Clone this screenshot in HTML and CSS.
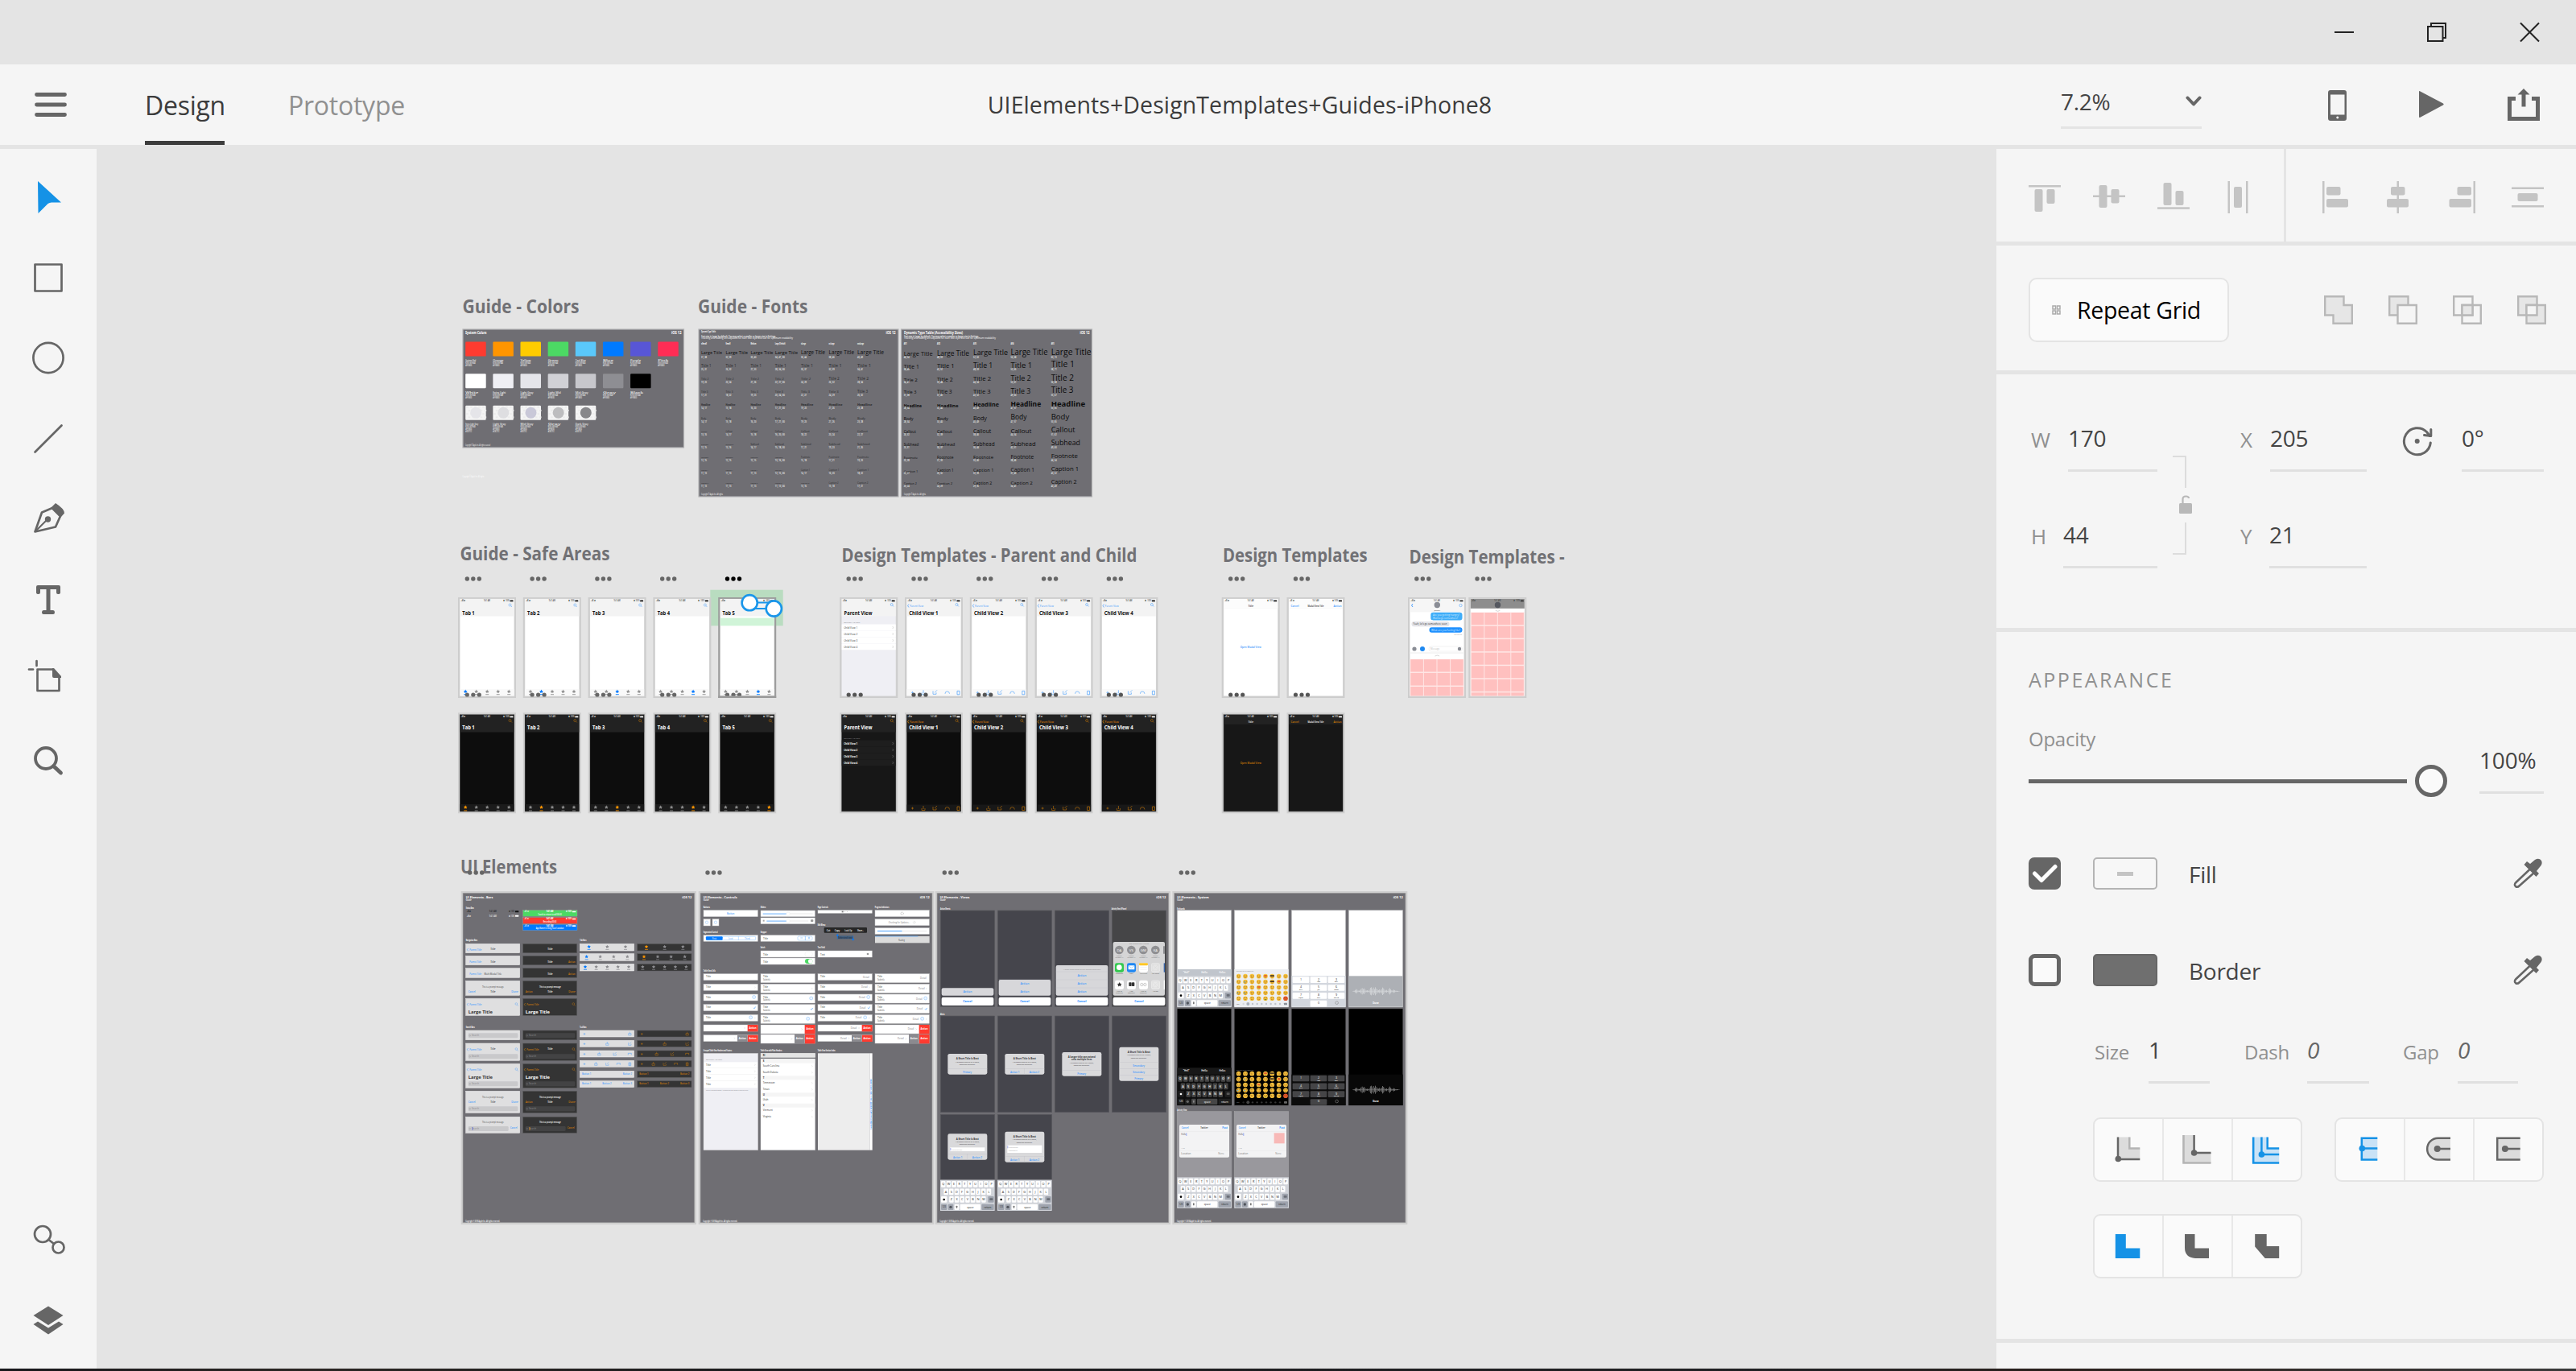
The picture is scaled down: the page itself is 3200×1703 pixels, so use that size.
FILE: index.html
```html
<!DOCTYPE html>
<html lang="en">
<head>
<meta charset="utf-8">
<title>UIElements+DesignTemplates+Guides-iPhone8</title>
<link rel="stylesheet" href="styles.css">
</head>
<body>
<div class="app">
  <div class="titlebar">
    <svg class="winbtn" viewBox="2854 0 115 80"><path d="M2900 40H2924"/></svg>
    <svg class="winbtn" viewBox="2969 0 115 80"><path d="M3016 33H3034.500V51H3016ZM3020 33V29H3038V47H3034.500"/></svg>
    <svg class="winbtn" viewBox="3084 0 115 80"><path d="M3131 28.500L3154 51.500M3154 28.500L3131 51.500"/></svg>
  </div>

  <header class="header">
    <div class="header-left">
      <svg class="menu" viewBox="43 110 40 40"><path d="M45.500 117.500H80.500M45.500 130H80.500M45.500 142.500H80.500"/></svg>
      <div class="tab active">Design</div>
      <div class="tab">Prototype</div>
    </div>
    <div class="doc-title">UIElements+DesignTemplates+Guides-iPhone8</div>
    <div class="header-right">
      <div class="zoom"><span>7.2%</span><svg width="20" height="14" viewBox="0 0 20 14"><path d="M2.500 2.500L10 10.500L17.500 2.500"/></svg></div>
      <div class="actions">
        <svg viewBox="2885 110 40 40"><path fill-rule="evenodd" d="M2895 112H2912Q2915 112 2915 115V147Q2915 150 2912 150H2895Q2892 150 2892 147V115Q2892 112 2895 112ZM2895 117.500V142.500H2912.500V117.500ZM2903.700 144.500A1.500 1.500 0 1 0 2903.800 144.500Z"/></svg>
        <svg viewBox="3000 110 40 40"><path d="M3005 114Q3005 112.500 3006.500 113.500L3035 128.500Q3036.500 129.500 3035 130.500L3006.500 145.800Q3005 146.500 3005 145Z"/></svg>
        <svg viewBox="3115 110 40 40"><path d="M3115 120H3125V125H3120V145H3150V125H3145V120H3155V150H3115ZM3135 110L3142.500 117.500H3137.500V132.500H3132.500V117.500H3127.500Z"/></svg>
      </div>
    </div>
  </header>

  <main class="main">
    <nav class="tools">
      <svg viewBox="0 195 120 100"><path class="blue" d="M47 225L76 251.500H64Q61.500 251.500 59.500 253L47.500 265Z"/></svg>
      <svg viewBox="0 295 120 100"><rect class="ln" x="43.500" y="328.500" width="33" height="33"/></svg>
      <svg viewBox="0 395 120 100"><circle class="ln" cx="60" cy="444.500" r="18.600"/></svg>
      <svg viewBox="0 495 120 100"><path class="ln" d="M43.500 561.500L76.500 528.500"/></svg>
      <svg viewBox="0 595 120 100"><path class="ln" d="M43.500 660.500L52 636.500L65 631L75 641L69 654.500Z"/><path class="ln thin" d="M44 660L58 646"/><circle class="fl" cx="59.500" cy="645" r="3.700"/><path class="fl" d="M63 631L69 625Q80 632 80 637.500L75 643Z"/></svg>
      <svg viewBox="0 695 120 100"><path class="fl" d="M47 727H73Q75 727 75 729V736Q75 738 72 738Q70 738 70 736V732H62.500V758H66Q68 758 68 760.500Q68 763 66 763H54Q52 763 52 760.500Q52 758 54 758H57.500V732H50V736Q50 738 48 738Q45 738 45 736V729Q45 727 47 727Z"/></svg>
      <svg viewBox="0 795 120 100"><path class="ln" d="M46.500 833V858H73.500V840M46.500 831.500H66M45.500 821V827M36 831.500H41"/><path class="fl" d="M65 830H67L76 840V842H67Q65 842 65 840Z"/></svg>
      <svg viewBox="0 895 120 100"><circle class="ln w4" cx="57" cy="942" r="13"/><path class="ln w5" d="M67.500 952.500L75.500 960"/></svg>
      <svg class="push" viewBox="0 1490 120 100"><circle class="ln" cx="53" cy="1533" r="10"/><circle class="ln" cx="72.500" cy="1549.500" r="7"/><path class="ln" d="M60.500 1540L67 1545"/></svg>
      <svg viewBox="0 1590 120 100"><path class="fl" d="M60 1622.500L78.500 1634L60 1646L41.500 1634ZM47 1641.500L60 1649.500L73 1641.500L78.500 1645L60 1657.500L41.500 1645Z"/></svg>
    </nav>

    <section class="canvas">
      <svg id="board" viewBox="120 185 2360 1515" width="2360" height="1515"></svg>
    </section>

    <aside class="panel">
      <div class="align">
        <div class="align-group split">
          <svg viewBox="2520 225 40 40"><rect x="2520" y="230" width="40" height="2.500"/><rect x="2527.500" y="235" width="10" height="28" rx="2"/><rect x="2542.500" y="235" width="10" height="18" rx="2"/></svg>
          <svg viewBox="2600 225 40 40"><rect x="2600" y="242.500" width="40" height="2.500"/><rect x="2607.500" y="230" width="10" height="28" rx="2"/><rect x="2622.500" y="235" width="10" height="17.500" rx="2"/></svg>
          <svg viewBox="2680 225 40 40"><rect x="2680" y="257.300" width="40" height="2.500"/><rect x="2687.500" y="227" width="10" height="28" rx="2"/><rect x="2702.500" y="237" width="10" height="18" rx="2"/></svg>
          <svg viewBox="2760 225 40 40"><rect x="2767.500" y="225" width="2.500" height="40"/><rect x="2790" y="225" width="2.500" height="40"/><rect x="2775" y="232" width="10" height="26" rx="2"/></svg>
        </div>
        <div class="align-group">
          <svg viewBox="2880 225 40 40"><rect x="2885" y="225" width="2.500" height="40"/><rect x="2890" y="232" width="17.500" height="10.500" rx="2"/><rect x="2890" y="247" width="27" height="10.500" rx="2"/></svg>
          <svg viewBox="2960 225 40 40"><rect x="2977.500" y="225" width="2.500" height="40"/><rect x="2970" y="232" width="17.500" height="10.500" rx="2"/><rect x="2965" y="247" width="27" height="10.500" rx="2"/></svg>
          <svg viewBox="3040 225 40 40"><rect x="3072.500" y="225" width="2.500" height="40"/><rect x="3052.500" y="232" width="17.500" height="10.500" rx="2"/><rect x="3042.500" y="247" width="27.500" height="10.500" rx="2"/></svg>
          <svg viewBox="3120 225 40 40"><rect x="3120" y="232.500" width="40" height="2.500"/><rect x="3120" y="255" width="40" height="2.500"/><rect x="3127.500" y="240" width="25" height="10" rx="2"/></svg>
        </div>
      </div>

      <div class="repeat">
        <button class="repeat-btn"><svg width="11" height="12" viewBox="0 0 11 12"><path d="M1 1H4.500V5H1ZM6.500 1H10V5H6.500ZM1 7H4.500V11H1ZM6.500 7H10V11H6.500Z"/></svg><span>Repeat Grid</span></button>
        <div class="bool">
          <svg viewBox="0 0 36 36"><path d="M1.200 1.200H24.500V12H34.800V34.800H11.500V24.500H1.200Z"/></svg>
          <svg viewBox="0 0 36 36"><path d="M1.200 1.200H24.500V24.500H1.200Z"/><path class="bg" d="M11.500 12H34.800V34.800H11.500Z"/></svg>
          <svg viewBox="0 0 36 36"><path class="no" d="M1.200 1.200H24.500V24.500H1.200Z"/><path class="no" d="M11.500 12H34.800V34.800H11.500Z"/><path d="M11.500 12H24.500V24.500H11.500Z"/></svg>
          <svg viewBox="0 0 36 36"><path d="M1.200 1.200H24.500V24.500H1.200Z"/><path d="M11.500 12H34.800V34.800H11.500Z"/><path class="bg" d="M11.500 12H24.500V24.500H11.500Z"/></svg>
        </div>
      </div>

      <div class="transform">
        <label class="field f-w"><span>W</span><b>170</b></label>
        <svg class="lock" viewBox="2680 525 100 181"><path d="M2699 567H2715V606M2699 688H2715V649"/><path class="lk" d="M2708.500 625H2721.500Q2723 625 2723 626.500V636.500Q2723 638 2721.500 638H2708.500Q2707 638 2707 636.500V626.500Q2707 625 2708.500 625Z"/><path class="sh" d="M2711.500 626V620Q2711.500 616.500 2715.300 616.500Q2719 616.500 2719 619"/></svg>
        <label class="field f-x"><span>X</span><b>205</b></label>
        <label class="field f-r"><svg width="45" height="40" viewBox="2980 528 45 40"><path d="M3019.300 550A16.500 16.500 0 1 1 3014.500 536.500L3018.500 541.500"/><path d="M3019.800 533.500V541.500L3011.500 540.500"/><circle cx="3002.700" cy="548" r="3"/></svg><b>0°</b></label>
        <label class="field f-h"><span>H</span><b>44</b></label>
        <label class="field f-y"><span>Y</span><b>21</b></label>
      </div>

      <div class="appearance">
        <h2>APPEARANCE</h2>
        <div class="opacity">
          <div class="slider">
            <span>Opacity</span>
            <svg viewBox="2520 950 520 40"><path d="M2520 970.500H2990"/><circle cx="3020" cy="970" r="17.500"/></svg>
          </div>
          <b class="val">100%</b>
        </div>
        <div class="prop">
          <svg class="check" viewBox="0 0 40 40"><rect width="40" height="40" rx="7"/><path d="M7.500 20L16 28.500L33 11.500"/></svg>
          <i class="swatch none"></i><span>Fill</span>
          <svg class="dropper" viewBox="3120 1065 40 40"><path class="o" d="M3143.500 1079L3125.500 1096Q3122.500 1099 3125 1101Q3127 1103 3130 1100L3148 1084"/><path d="M3135.500 1074L3139 1070L3143 1073L3149 1068Q3154 1065 3157 1069Q3159 1073 3155 1077L3151 1082L3154 1085L3150.500 1089Z"/></svg>
        </div>
        <div class="prop">
          <svg class="check off" viewBox="0 0 40 40"><rect x="2.500" y="2.500" width="35" height="35" rx="5"/></svg>
          <i class="swatch"></i><span>Border</span>
          <svg class="dropper" viewBox="3120 1065 40 40"><path class="o" d="M3143.500 1079L3125.500 1096Q3122.500 1099 3125 1101Q3127 1103 3130 1100L3148 1084"/><path d="M3135.500 1074L3139 1070L3143 1073L3149 1068Q3154 1065 3157 1069Q3159 1073 3155 1077L3151 1082L3154 1085L3150.500 1089Z"/></svg>
        </div>
        <div class="stroke">
          <label class="s-size"><span>Size</span><b>1</b></label>
          <label class="s-dash"><span>Dash</span><b class="it">0</b></label>
          <label class="s-gap"><span>Gap</span><b class="it">0</b></label>
        </div>
        <div class="segs">
          <div class="seg">
            <div><svg viewBox="2614.700 1398 60 60"><path class="f" d="M2631 1412.500H2646V1426.500H2659V1440H2631Z"/><path class="l" d="M2646 1412.500V1426.500H2659"/><path class="d" d="M2631.700 1412.500V1440H2659"/><circle class="dd" cx="2632" cy="1439.500" r="3.800"/></svg></div>
            <div><svg viewBox="2701 1398 60 60"><path class="f" d="M2712.500 1410H2727V1432H2747.500V1445H2712.500Z"/><path class="l" d="M2713.500 1410V1444.500H2747.500"/><path class="d" d="M2726.600 1410V1432H2747.500"/><circle class="dd" cx="2726.600" cy="1432" r="3.800"/></svg></div>
            <div><svg viewBox="2786.300 1398 60 60"><path class="fb" d="M2798 1412.500H2817V1426.500H2831.500V1445H2798Z"/><path class="b" d="M2817 1412.500V1426.500H2831.500M2799.500 1412.500V1444.500H2831.500M2809.700 1412.500V1434H2831.500"/><circle class="bb" cx="2809.700" cy="1434" r="3.800"/></svg></div>
          </div>
          <div class="seg">
            <div><svg viewBox="2914.700 1398 60 60"><path class="fb" d="M2934 1413H2954V1441H2934Z"/><path class="b" d="M2954 1413.800H2934.500V1440.500H2954M2935 1426.500H2954"/><circle class="bb" cx="2935" cy="1426.500" r="3.800"/></svg></div>
            <div><svg viewBox="3001 1398 60 60"><path class="f" d="M3045 1413.800H3030A13 13 0 0 0 3030 1440.500H3045Z"/><path class="d" d="M3045 1413.800H3029.500A13.300 13.300 0 0 0 3029.500 1440.500H3045M3029 1427H3045"/><circle class="dd" cx="3028.700" cy="1427" r="4"/></svg></div>
            <div><svg viewBox="3086.300 1398 60 60"><path class="f" d="M3102 1413H3131V1441H3102Z"/><path class="d" d="M3131 1413.800H3102.500V1440.500H3131M3112 1427H3131"/><circle class="dd" cx="3112.200" cy="1427" r="4"/></svg></div>
          </div>
          <div class="seg">
            <div><svg viewBox="2614.700 1518 60 60"><path class="bb" d="M2628.500 1533H2641.500V1550.500H2659V1563H2628.500Z"/></svg></div>
            <div><svg viewBox="2701 1518 60 60"><path class="dd" d="M2715 1533H2727.500V1550.500H2745V1563H2728Q2715 1562 2715 1550Z"/></svg></div>
            <div><svg viewBox="2786.300 1518 60 60"><path class="dd" d="M2801.500 1533H2816V1548H2831.500V1563H2814L2801.500 1548.500Z"/></svg></div>
          </div>
        </div>
      </div>
      <div class="rest"></div>
    </aside>
  </main>
  <div class="taskbar-edge"></div>
</div>
<script src="board.js"></script>
</body>
</html>
```
FILE: styles.css
```css
* { box-sizing: border-box; }
body { margin: 0; background: #e4e4e4; font-family: "Open Sans", "Noto Sans", sans-serif; letter-spacing: -0.016em; color: #444; }
svg { display: block; flex: none; }
b, i { font-weight: 400; font-style: normal; }

.app { width: 3200px; height: 1703px; display: flex; flex-direction: column; overflow: hidden; }

.titlebar { height: 80px; display: flex; justify-content: flex-end; padding-right: 1px; }
.winbtn { width: 115px; height: 80px; fill: none; stroke: #222; stroke-width: 2; }

.header { height: 100px; background: #f5f5f5; display: flex; }
.header-left { width: 600px; display: flex; padding-left: 43px; }
.menu { width: 40px; height: 40px; margin: 30px 97px 0 0; stroke: #666; stroke-width: 4.800; stroke-linecap: round; }
.tab { width: 99px; margin-right: 79px; height: 100px; line-height: 101px; font-size: 32px; color: #909090; white-space: nowrap; }
.tab.active { color: #3c3c3c; border-bottom: 5px solid #3c3c3c; }
.doc-title { flex: 1; text-align: center; font-size: 28.500px; letter-spacing: 0.003em; line-height: 100px; color: #3c3c3c; }
.header-right { width: 720px; padding-left: 80px; display: flex; }
.zoom { width: 175px; height: 80px; border-bottom: 3px solid #e4e4e4; display: flex; justify-content: space-between; align-items: center; font-size: 28px; padding-top: 15px; }
.zoom svg { fill: none; stroke: #666; stroke-width: 4; stroke-linecap: round; stroke-linejoin: round; }
.actions { display: flex; gap: 75px; margin: 30px 0 0 150px; }
.actions svg { width: 40px; height: 40px; fill: #666; }

.main { height: 1520px; padding-top: 5px; display: flex; }
.tools { width: 120px; background: #f5f5f5; padding: 10px 0; display: flex; flex-direction: column; }
.tools svg { width: 120px; height: 100px; }
.tools .push { margin-top: auto; }
.tools .blue { fill: #1592e6; }
.tools .fl { fill: #666; }
.tools .ln { fill: none; stroke: #666; stroke-width: 2.700; stroke-linecap: round; stroke-linejoin: round; }
.tools .thin { stroke-width: 2; }
.tools .w4 { stroke-width: 3.800; }
.tools .w5 { stroke-width: 4.800; }
.canvas { width: 2360px; }

.panel { width: 720px; display: flex; flex-direction: column; gap: 5px; }
.panel > div { background: #f5f5f5; padding: 0 40px; }
.panel .align { height: 115px; display: flex; padding: 0; }
.align-group { display: flex; gap: 40px; padding: 40px; fill: #c4c4c4; }
.align-group svg { width: 40px; height: 40px; }
.split { width: 360px; border-right: 3px solid #e4e4e4; padding-right: 0; }

.repeat { height: 155px; display: flex; justify-content: space-between; }
.repeat-btn { width: 249px; height: 80px; margin-top: 40px; border: 2.500px solid #e4e4e4; border-radius: 10px; background: #fafafa; font: inherit; font-size: 28.500px; letter-spacing: -0.011em; color: #000; display: flex; align-items: center; gap: 20px; padding: 0 0 0 27px; white-space: nowrap; }
.repeat-btn svg { fill: none; stroke: #aaa; stroke-width: 1.500; }
.bool { display: flex; gap: 44px; margin: 62px -3px 0 0; }
.bool svg { width: 36px; height: 36px; fill: #e6e6e6; stroke: #b8b8b8; stroke-width: 2.400; }
.bool .bg { fill: #f5f5f5; }
.bool .no { fill: none; }

.panel .transform { height: 315px; padding-top: 60px; display: grid; grid-template-columns: 160px 100px 160px 220px; grid-template-rows: 61px 61px; row-gap: 59px; }
.field { display: flex; }
.field span { font-size: 26px; line-height: 43px; color: #909090; padding-left: 3px; }
.field b, .val, .stroke b { margin-left: auto; border-bottom: 3px solid #e0e0e0; font-size: 28px; line-height: 39px; color: #444; height: 61px; }
.f-w b { width: 111px; } .f-h b { width: 117px; } .f-x b { width: 120px; } .f-y b { width: 121px; } .f-r b { width: 102px; }
.f-r { padding-left: 40px; }
.f-r svg { margin-top: 3px; fill: none; stroke: #666; stroke-width: 3; stroke-linecap: round; stroke-linejoin: round; }
.f-r circle { fill: #666; stroke: none; }
.lock { width: 100px; height: 181px; grid-row: 1 / 3; grid-column: 2; fill: none; stroke: #dcdcdc; stroke-width: 2; }
.lock .lk { fill: #b8b8b8; stroke: none; }
.lock .sh { stroke: #b8b8b8; stroke-width: 2.200; }
.f-h { grid-column: 1; } .f-y { grid-column: 3; }

.panel .appearance { height: 878px; padding-top: 39px; }
h2 { margin: 0; height: 76px; font-size: 25px; font-weight: 400; line-height: 40px; letter-spacing: 2.500px; color: #909090; }
.opacity { display: flex; height: 90px; margin-bottom: 75px; }
.slider { width: 520px; }
.slider span { display: block; height: 50px; font-size: 24px; line-height: 36px; color: #909090; }
.slider svg { width: 520px; height: 40px; fill: #fafafa; stroke: #666; stroke-width: 5; }
.opacity .val { width: 80px; margin-top: 25px; padding-left: 0; letter-spacing: -0.005em; }
.prop { display: flex; height: 40px; margin-bottom: 80px; }
.check { width: 40px; height: 40px; margin-right: 40px; fill: #666; }
.check path { fill: none; stroke: #fff; stroke-width: 5; stroke-linecap: round; stroke-linejoin: round; }
.check.off { fill: #fafafa; stroke: #666; stroke-width: 5; }
.swatch { width: 80px; height: 40px; border: 2.500px solid #666; border-radius: 5px; background: #6f6f6f; margin-right: 39px; }
.swatch.none { border-color: #b4b4b4; background: linear-gradient(#c4c4c4, #c4c4c4) center / 20px 5px no-repeat #f7f7f7; }
.prop span { font-size: 28px; line-height: 43px; }
.dropper { width: 40px; height: 40px; margin-left: auto; fill: #666; }
.dropper .o { fill: none; stroke: #666; stroke-width: 2.500; }
.stroke { display: flex; margin-top: -20px; padding-left: 80px; height: 61px; }
.stroke label { display: flex; padding-left: 2px; }
.stroke span { font-size: 24px; line-height: 43px; color: #909090; }
.stroke b { padding-left: 0; }
.stroke .it { font-style: italic; color: #666; }
.s-size { width: 145px; } .s-dash { width: 157px; margin-left: 41px; } .s-gap { width: 145px; margin-left: 40px; }
.s-size b { width: 76px; } .s-dash b { width: 77px; } .s-gap b { width: 75px; }
.segs { display: flex; flex-wrap: wrap; gap: 40px; padding-left: 80px; margin-top: 42px; }
.seg { width: 260px; height: 80px; display: flex; border: 2.500px solid #e4e4e4; border-radius: 9px; background: #fafafa; }
.seg div { flex: 1; display: flex; align-items: center; justify-content: center; }
.seg div + div { border-left: 2px solid #e8e8e8; }
.seg svg { width: 60px; height: 60px; stroke-width: 2.500; }
.seg .f { fill: #dcdcdc; }
.seg .fb { fill: #c9e2f6; }
.seg .l { fill: none; stroke: #b4b4b4; }
.seg .d { fill: none; stroke: #666; }
.seg .b { fill: none; stroke: #1592e6; }
.seg .dd { fill: #666; }
.seg .bb { fill: #1592e6; }
.rest { flex: 1; }
.taskbar-edge { height: 3px; background: linear-gradient(90deg, #17171b, #2a2522 12%, #1b1b1d 30%, #202022 70%, #2a201c 80%, #3a3a3a); }

#board text { font-family: "Open Sans", "Noto Sans", sans-serif; letter-spacing: 0; }
```
FILE: board.js
```js
// Builds the artboards shown on the canvas. Phones are drawn in page pixels,
// the four "UI Elements" boards in thirds of a pixel.
var out = [];
function R(x, y, w, h, f, rx, extra) {
  out.push('<rect x="' + x + '" y="' + y + '" width="' + w + '" height="' + h + '" fill="' + f + '"' + (rx ? ' rx="' + rx + '"' : '') + (extra || '') + '/>');
}
function C(x, y, r, f, extra) {
  out.push('<circle cx="' + x + '" cy="' + y + '" r="' + r + '" fill="' + f + '"' + (extra || '') + '/>');
}
function P(d, stroke, w, fill) {
  out.push('<path d="' + d + '" fill="' + (fill || 'none') + '" stroke="' + stroke + '" stroke-width="' + w + '"/>');
}
// w: fitted width, a: anchor, b: weight
function T(x, y, s, str, f, o) {
  o = o || {};
  out.push('<text x="' + x + '" y="' + y + '" font-size="' + s + '" fill="' + f + '"' +
    (o.w ? ' textLength="' + o.w + '" lengthAdjust="spacingAndGlyphs"' : '') +
    (o.a ? ' text-anchor="' + o.a + '"' : '') + (o.b ? ' font-weight="' + o.b + '"' : '') + '>' + str + '</text>');
}
function dots(x, y, f, r) { for (var i = 0; i < 3; i++) C(x + i * 7.5, y, r || 2.7, f || '#666'); }
function star(x, y, r, f) {
  var d = '';
  for (var i = 0; i < 10; i++) {
    var a = -Math.PI / 2 + i * Math.PI / 5, q = i % 2 ? r * 0.5 : r;
    d += (i ? 'L' : 'M') + (x + q * Math.cos(a)).toFixed(2) + ' ' + (y + q * Math.sin(a)).toFixed(2);
  }
  out.push('<path d="' + d + 'Z" fill="' + f + '"/>');
}
var G = '#6f6e73';

// Section headings
[['Guide - Colors', 574.5, 389, 145], ['Guide - Fonts', 867, 389, 136.5], ['Guide - Safe Areas', 571.5, 696, 186],
 ['Design Templates - Parent and Child', 1045.5, 698.2, 367], ['Design Templates', 1519, 698.2, 179.5],
 ['Design Templates -', 1750.5, 700, 193], ['UI Elements', 572, 1084.500, 120]].forEach(function (h) {
  T(h[1], h[2], 23, h[0], '#717175', { w: h[3], b: 700 });
});

// Guide - Colors
function guide(x, y, w, h) { R(x, y, w, h, G, 0, ' stroke="#b5b5b7" stroke-width="1.2"'); }
guide(575, 409, 274.500, 147);
T(578, 414.700, 5, 'System Colors', '#fff', { w: 26.5, b: 700 });
T(846.500, 414.700, 5, 'iOS 12', '#fff', { w: 12.5, b: 700, a: 'end' });
var rows = [['#ff3b30', '#ff9500', '#ffcc00', '#4cd964', '#5ac8fa', '#007aff', '#5856d6', '#ff2d55'],
  ['#fff', '#efeff4', '#e5e5ea', '#d1d1d6', '#c7c7cc', '#8e8e93', '#000'],
  ['#e5e5e9', '#dedee1', '#c9c8d8', '#bdbdbf', '#87878a']];
var names = [['System Red', 'Orange', 'Yellow', 'Green', 'Teal Blue', 'Blue', 'Purple', 'Pink'],
  ['White', 'Extra Light', 'Light Gray', 'Light Mid', 'Mid Gray', 'Gray', 'Black'], ['Extra Light Gray', 'Light Gray', 'Mid Gray', 'Gray', 'Dark Gray']];
rows.forEach(function (r, j) {
  r.forEach(function (c, i) {
    var x = 578.200 + i * 34.150, y = [424.600, 464.300, 503.700][j], w = j ? 16 : 13;
    R(x, y, 25.500, 18, j == 2 ? '#f4f4f4' : c, 1.2);
    if (j == 2) {
      for (var k = 0; k < 5; k++) for (var m = 0; m < 4; m++) R(x + 1 + k * 5 + (m % 2) * 2.5, y + 1 + m * 4.200, 2.5, 2, '#ececec');
      C(x + 13, y + 9, 7, c);
    }
    T(x, y + 24.300, 2.9, names[j][i], '#e8e8e8', { b: 600, w: w });
    T(x, y + 27.300, 2.9, 'R255 G59 B48', '#e8e8e8', { b: 600, w: 12.5 });
    T(x, y + 30.600, 2.9, '#FF3B30', '#e8e8e8', { b: 600, w: 8 });
    if (j == 2) T(x, y + 33.500, 2.9, '#C8C7CC', '#e8e8e8', { b: 600, w: 8 });
  });
});
T(578, 554, 3, 'Copyright © Apple Inc. All rights reserved', '#fff', { w: 31 });
T(574.500, 593, 3, 'Copyright © Apple Inc. All rights', '#fff', { w: 27 });

// Guide - Fonts
guide(868, 409, 248, 208);
guide(1119.500, 409, 237, 208);
T(871, 413, 3, 'Dynamic Type Table', '#fff', { w: 18, b: 700 });
T(1123, 414.500, 4.4, 'Dynamic Type Table (Accessibility Sizes)', '#fff', { w: 73, b: 700 });
T(1112.500, 414.500, 5, 'iOS 12', '#fff', { w: 12, b: 700, a: 'end' });
T(1353.500, 414.500, 5, 'iOS 12', '#fff', { w: 12, b: 700, a: 'end' });
[871, 1123].forEach(function (x) {
  T(x, 419, 3.4, 'Text size is Large by default. You may select a smaller or larger size in Settings.', '#fff', { w: 93, b: 600 });
  T(x, 421.300, 3.4, 'Tracking and leading are adjusted for each text style and size for optimum readability', '#fff', { w: 114 });
});
var styles = ['Large Title', 'Title 1', 'Title 2', 'Title 3', 'Headline', 'Body', 'Callout', 'Subhead', 'Footnote', 'Caption 1', 'Caption 2'];
var pt = [
  [31, 32, 33, 34, 36, 38, 40, 44, 48, 52, 56, 60], [25, 26, 27, 28, 30, 32, 34, 38, 43, 48, 53, 58],
  [19, 20, 21, 22, 24, 26, 28, 34, 39, 44, 50, 56], [17, 18, 19, 20, 22, 24, 26, 31, 37, 43, 49, 55],
  [14, 15, 16, 17, 19, 21, 23, 28, 33, 40, 47, 53], [14, 15, 16, 17, 19, 21, 23, 28, 33, 40, 47, 53],
  [13, 14, 15, 16, 18, 20, 22, 26, 32, 38, 44, 51], [12, 13, 14, 15, 17, 19, 21, 25, 30, 36, 42, 49],
  [12, 12, 12, 13, 15, 17, 19, 23, 27, 33, 38, 44], [11, 11, 11, 12, 14, 16, 18, 22, 26, 32, 37, 43],
  [11, 11, 11, 11, 13, 15, 17, 20, 24, 29, 34, 40]];
var colx = [871, 901.500, 932.400, 962.700, 995, 1029.600, 1065, 1122.700, 1164, 1209, 1255.500, 1305.700];
var ltw = [26, 27.5, 28, 28.5, 30, 31.5, 33, 36, 40, 43, 46, 50];
['xSmall', 'Small', 'Medium', 'Large (Default)', 'xLarge', 'xxLarge', 'xxxLarge', 'AX1', 'AX2', 'AX3', 'AX4', 'AX5'].forEach(function (s, i) {
  T(colx[i], 427.800, 3, s, '#fff', { b: 700, w: [7, 6, 7, 13, 6, 7, 8, 4, 4, 4, 4, 4][i] });
});
var basey = [440.300, 456, 472.200, 487.800, 504.200, 520.500, 536.800, 552.800, 568.800, 585, 600.800];
styles.forEach(function (s, j) {
  colx.forEach(function (x, i) {
    var z = pt[j][i], dark = i > 6 || j == 0;
    T(x, basey[j] + (i > 6 ? 1.6 - (i - 7) * 0.300 : 0), z * 0.180, s, dark ? '#0c0c0c' : '#2c2c2e', { b: s == 'Headline' ? 700 : i > 8 ? 500 : 400, w: j ? 0 : ltw[i] });
    T(x, basey[j] + 4.200, 2.800, z + ', ' + Math.round(z * 1.22) + (i == 3 ? ', 00' : ''), '#eee', { b: 600, w: i == 3 ? 12 : 7 });
  });
});
T(871, 615, 3, 'Copyright © Apple Inc. All rights', '#fff', { w: 27 });
T(1123, 615, 3, 'Copyright © Apple Inc. All rights', '#fff', { w: 27 });

// Phones: x is the left edge of the outer frame
function frame(x, dark, fill, sel) {
  var y = dark ? 885.300 : 742;
  R(x, y, 72, 125, sel ? '#9c9c9c' : dark ? '#cfcfcf' : '#cdcdcd');
  R(x + 2, y + 1.700, 68, 121.300, dark ? '#777' : sel ? '#b5b5b5' : '#dadada');
  R(x + 2.500, dark ? 888 : 744, 67, dark ? 119.700 : 120.300, fill);
}
function status(x, y, c) {
  T(x + 3.500, y + 3.400, 2.600, '..ıll ≋', c, { b: 700, w: 6 });
  T(x + 36, y + 3.400, 2.600, '9:41 AM', c, { w: 8, a: 'middle' });
  T(x + 64, y + 3.400, 2.600, '✱ 100%', c, { w: 8, a: 'end' });
  R(x + 64.500, y + 1.500, 4, 1.800, c, 0.4);
}
function search(x, y, c) { C(x, y, 1.500, 'none', ' stroke="' + c + '" stroke-width=".6"'); P('M' + (x + 1) + ' ' + (y + 1) + 'l1.500 1.500', c, 0.6); }
function nav(x, dark, title, h) {
  var y = dark ? 888 : 744, fg = dark ? '#fff' : '#111';
  R(x + 2.500, y, 67, h || 21.500, dark ? '#222' : '#f3f3f3');
  status(x, y, fg);
  if (title) T(x + 5.300, y + (dark ? 18.200 : 19.600), 6.100, title, fg, { b: 700, w: { T: 15.300, P: 35, C: 36 }[title[0]] });
}
function tabbar(x, dark, on) {
  R(x + 2.500, dark ? 999 : 856, 67, dark ? 8.700 : 8.300, dark ? '#1b1b1b' : '#f9f9f9');
  for (var i = 0; i < 5; i++) {
    var c = i == on ? (dark ? '#ff9500' : '#007aff') : (dark ? '#8a8a8a' : '#929292');
    star(x + 9.200 + i * 13.500, dark ? 1002.700 : 859, 2.500, c);
    R(x + 7.200 + i * 13.500, dark ? 1006.300 : 862, 4, 1.200, c, 0, ' opacity=".7"');
  }
}
function toolbar(x, dark) {
  var c = dark ? '#b06a08' : '#5aa7fb', y = dark ? 1004 : 860.300;
  R(x + 2.500, y - 4.500, 67, dark ? 8 : 8.200, dark ? '#181818' : '#f9f9f9');
  P('M' + (x + 8) + ' ' + y + 'h3m-1.500 -1.500v3', c, 0.7);
  P('M' + (x + 21) + ' ' + y + 'v2.500h4v-2.500m-2 1v-4', c, 0.7);
  P('M' + (x + 35) + ' ' + (y - 2) + 'v4h4v-2m-2 0l3 -3', c, 0.7);
  P('M' + (x + 50) + ' ' + (y + 1.500) + 'q0 -3 2.500 -3q3 0 3 3', c, 0.7);
  P('M' + (x + 65) + ' ' + (y - 2) + 'h3v4.500h-3z', c, 0.8);
}
R(882.300, 732.700, 90.400, 44.600, '#b9dcc0');
for (var i = 0; i < 5; i++) {
  var x = 569 + i * 80.800;
  frame(x, 0, '#fff', i == 4);
  nav(x, 0, 'Tab ' + (i + 1)); search(x + 64.500, 751.500, '#5aa7fb');
  if (i == 4) R(x + 2.500, 767.600, 67, 9.700, '#d0f4d8');
  dots(x + 11.300, 719, i == 4 ? '#000' : '#666');
  tabbar(x, 0, [0, 1, 2, 3, 3][i]);
  dots(x + 11.300, 863, '#666', 2.6);
  if (i == 4) { R(x, 864.300, 72, 2.700, '#9c9c9c'); R(x + 10, 867, 20, 2, '#e4e4e4'); }
  frame(x, 1, '#0d0d0d'); nav(x, 1, 'Tab ' + (i + 1)); search(x + 64.500, 895, '#b06a08'); tabbar(x, 1, i);
}
P('M931 748.500H961M931 756H961', '#1a96ea', 2.200);
C(931.200, 748.700, 9.600, '#fff', ' stroke="#1a96ea" stroke-width="2.600"');
C(961.300, 756, 9.600, '#fff', ' stroke="#1a96ea" stroke-width="2.600"');

for (i = 0; i < 5; i++) [0, 1].forEach(function (dark) {
  var x = 1043.200 + i * 80.800, y = dark ? 888 : 744, k = dark ? '#ff9500' : '#3b97fc';
  frame(x, dark, i ? (dark ? '#0d0d0d' : '#fff') : (dark ? '#171717' : '#efeff4'));
  nav(x, dark, i ? 'Child View ' + i : 'Parent View');
  search(x + 64.500, y + 7, dark ? '#b06a08' : '#5aa7fb');
  if (i) {
    P('M' + (x + 5) + ' ' + (y + 6.500) + 'l-1.400 2l1.400 2', k, 0.700);
    T(x + 6.200, y + 9.700, 3.100, 'Parent View', k, { w: 17 });
    toolbar(x, dark);
  } else {
    T(x + 5, y + 30, 2.400, 'SECTION HEADER', '#8a8a8f', { w: 20 });
    for (var r = 0; r < 4; r++) {
      R(x + 2.500, y + 31.500 + r * 8, 67, 7.700, dark ? '#1e1e1e' : '#fff');
      T(x + 5, y + 36.600 + r * 8, 3.100, 'Child View ' + (r + 1), dark ? '#fff' : '#333', { w: 17, b: dark ? 700 : 400 });
      P('M' + (x + 65.500) + ' ' + (y + 34 + r * 8) + 'l1 1.500l-1 1.500', '#aaa', 0.4);
    }
  }
  if (!dark) { dots(x + 11, 719); dots(x + 11, 863, '#555', 2.6); }
});
for (i = 0; i < 2; i++) [0, 1].forEach(function (dark) {
  var x = 1517.700 + i * 80.800, y = dark ? 888 : 744, k = dark ? '#d07c06' : '#3b97fc', fg = dark ? '#fff' : '#333';
  frame(x, dark, dark ? '#171717' : '#fff'); nav(x, dark, '', 11.800);
  if (!dark) { R(x + 2.500, y, 67, 11.800, '#fcfcfc'); status(x, y, '#111'); }
  if (i) {
    T(x + 5, y + 9.600, 3.100, 'Cancel', k, { w: 10, b: 600 }); T(x + 68, y + 9.600, 3.100, 'Action', k, { w: 10, a: 'end', b: 600 });
    T(x + 36, y + 9.600, 3.100, 'Modal View Title', fg, { w: 20, a: 'middle', b: 600 });
  } else {
    T(x + 36, y + 9.600, 3.100, 'Title', fg, { a: 'middle', b: 600 });
    T(x + 36, y + 60.700, 3.100, 'Open Modal View', k, { w: 26, a: 'middle', b: 600 });
  }
  if (!dark) { dots(x + 11, 719); dots(x + 11, 863, '#555', 2.6); }
});

// Messages templates
frame(1749, 0, '#fff'); dots(1759.800, 719);
R(1751.500, 744, 67, 16.300, '#f6f6f6'); status(1749, 744, '#222');
C(1785.300, 751.500, 3.700, '#8a8d95'); T(1785.300, 758.600, 2.400, 'Johnny', '#333', { a: 'middle' });
P('M1755 750l-1.500 2l1.500 2', '#007aff', 0.7); C(1814.500, 752, 1.700, 'none', ' stroke="#3b97fc" stroke-width=".5"');
R(1777.300, 760.700, 39.200, 9.700, '#3fadf8', 3); T(1780, 764.700, 2.900, 'Are you getting hungry?', '#cfe9ff', { w: 33 }); T(1780, 768.600, 2.900, 'Wanna go somewhere?', '#cfe9ff', { w: 31 });
R(1753.500, 772, 47, 6.200, '#e3e3e8', 3); T(1755.500, 776.200, 2.900, 'Yeah, let’s go somewhere soon', '#333', { w: 42 });
R(1775.500, 779.300, 41, 6.400, '#1e90ff', 3); T(1778, 783.600, 2.900, 'What are you feeling like?', '#d8ecff', { w: 36 });
T(1816, 788.500, 2.200, 'Delivered', '#999', { a: 'end' });
C(1757, 806, 2.600, '#8a8d95'); C(1767, 806, 3, '#1e88f0'); R(1775, 803, 41.500, 6, '#fff', 3, ' stroke="#ddd" stroke-width=".4"');
T(1777, 807, 2.800, 'Message', '#bbb'); C(1813, 806, 2.200, '#8a8d95');
R(1751.500, 810.300, 67, 1.500, '#f3f3f3'); P('M1782.500 815l2.800 -1l2.800 1', '#ccc', 0.8);
R(1751.500, 818.700, 67, 45.600, '#ffe6e5');
for (i = 0; i < 12; i++) { var gy = 819 + Math.floor(i / 4) * 17; R(1752.300 + (i % 4) * 16.600, gy, 15.600, Math.min(15.500, 864.300 - gy), '#ffc0bf'); }
frame(1824.300, 0, '#fff'); dots(1835, 719);
R(1826.800, 744, 67, 11.800, '#8d8d8d'); status(1824.300, 744, '#333'); C(1860.500, 751.500, 3.700, '#555860');
P('M1857.800 758.300l2.800 1l2.800 -1', '#ccc', 0.8);
R(1826.800, 760.500, 67, 103.800, '#ffe6e5');
for (i = 0; i < 28; i++) { gy = 761 + Math.floor(i / 4) * 16.550; R(1827.800 + (i % 4) * 16.500, gy, 15.500, Math.min(15, 864.300 - gy), '#ffc0bf'); }

// UI Elements boards: local unit is a third of a pixel
function board(ox, title, x0, w, tw) {
  out.push('<g transform="translate(' + ox + ' 1060) scale(.33333)">');
  R(x0 - 8, 141, w + 16, 1242, '#cfcfcf'); R(x0 - 2, 147, w + 4, 1230, '#a9a9a9'); R(x0, 149, w, 1226, G);
  T(x0 + 10, 167, 12, 'UI Elements - ' + title, '#fff', { w: tw, b: 700 });
  T(x0 + 10, 176, 7.500, 'Guide', '#fff', { b: 600 });
  T(x0 + w - 9, 167, 12, 'iOS 12', '#fff', { w: 36, b: 700, a: 'end' });
  T(x0 + 9, 1373, 8.500, 'Copyright © 2018 Apple Inc. All rights reserved.', '#fff', { w: 128, b: 600 });
}
function label(x, y, s, w) { T(x, y, 8, s, '#fff', { b: 700, w: w }); }
var LB = '#4ba0fb', BL = '#007aff', OR = '#c97a0c', GY = '#8b8b8f';
dots(583.700, 1084);

board(560, 'Bars', 46, 861, 101);
label(56, 208, 'Status Bars', 30); label(56, 328, 'Navigation Bars', 43); label(56, 650, 'Search Bars', 33); label(481, 328, 'Tab Bars', 24); label(481, 650, 'Tool Bars', 24);
[['#111', 220], ['#fff', 236]].forEach(function (s) {
  T(59, s[1], 8, '..ıll ≋', s[0], { w: 18, b: 700 }); T(157, s[1], 8, '9:41 AM', s[0], { w: 27, a: 'middle' }); T(238, s[1], 8, '✱ 100%', s[0], { w: 22, a: 'end' }); R(240, s[1] - 6, 13, 6, s[0], 1);
});
[['#4cd964', 212, 'Touch to return to call 00:03'], ['#ff3b30', 239, 'Recording 00:03'], ['#007aff', 265, 'App Name is Using Your Location']].forEach(function (s, i) {
  R(269, s[1], 202, 22.500, s[0], 0, ' stroke="#aaa" stroke-width="1"');
  T(273, s[1] + 8, 8, '..ıll ≋', '#fff', { w: 18, b: 700 }); T(369, s[1] + 8, 8, '9:41 AM', '#fff', { w: 26, a: 'middle', b: 700 }); T(450, s[1] + 8, 8, '✱ 100%', '#fff', { w: 21, a: 'end', b: 700 }); R(453, s[1] + 3, 13, 5, '#fff', 1);
  T(369, s[1] + 18, 8, s[2], '#fff', { w: [88, 50, 104][i], a: 'middle', b: 600 });
});
function card(x, y, w, h, dark) { R(x, y, w, h, dark ? '#343434' : '#dfdfe0', 0, ' stroke="' + (dark ? '#5a5a5c' : '#f2f2f2') + '" stroke-width="1.500"'); }
function back(x, y, k) { P('M' + (x + 9) + ' ' + (y - 4) + 'l-4 5l4 5', k, 1.800); T(x + 14, y + 4, 9, 'Parent Title', k, { w: 45, b: 600 }); }
function field(x, y, w, dark) { R(x, y, w, 18, dark ? '#434344' : '#c9c9cb', 4); C(x + 6, y + 9, 2.500, 'none', ' stroke="' + GY + '"'); T(x + 13, y + 12.500, 9, 'Search', GY, { w: 27 }); }
[[56, 0], [269, 1]].forEach(function (q) {
  var x = q[0], d = q[1], k = d ? OR : LB, fg = d ? '#fff' : '#444', M = { a: 'middle', b: 600 };
  [[337, 34], [382, 34], [428, 35], [475, 54], [541, 63], [660, 35], [708, 64], [784, 90], [886, 81], [982, 60]].forEach(function (c) { card(x, c[0], 201, c[1], d); });
  if (!d) { back(x, 358, k); T(x + 14, 409, 9, 'Parent Title', k, { w: 44, b: 600 }); T(x + 14, 454, 9, 'Parent Title', k, { w: 44, b: 600 }); T(x + 101, 454, 8.500, 'Multi Modal Title', fg, { w: 65, a: 'middle' }); }
  else { T(x + 195, 409, 9, 'Action', k, { w: 26, a: 'end', b: 600 }); T(x + 195, 454, 9, 'Action', k, { w: 26, a: 'end', b: 600 }); T(x + 101, 454, 9, 'Title', fg, M); }
  T(x + 101, 361, 9, 'Title', fg, M); T(x + 101, 409, 9, 'Title', fg, M);
  [500, 911, 1006].forEach(function (y) { T(x + 101, y, 8.500, 'This is a prompt message', fg, { w: 80, a: 'middle', b: d ? 600 : 400 }); });
  [520, 931].forEach(function (y) { T(x + 9, y, 9, d ? 'Action' : 'Cancel', k, { w: 27, b: 600 }); T(x + 101, y, 9, 'Title', fg, M); T(x + 195, y, 9, 'Done', k, { w: 25, a: 'end', b: 600 }); });
  [562, 730, 805].forEach(function (y) { back(x, y, k); C(x + 188, y - 1, 4, 'none', ' stroke="' + k + '" stroke-width="1.200"'); P('M' + (x + 191) + ' ' + (y + 2) + 'l4 5', k, 1.2); });
  T(x + 101, 733, 9, 'Title', fg, M);
  T(x + 9, 598, 18, 'Large Title', d ? '#fff' : '#333', { w: 91, b: 700 }); T(x + 9, 841, 18, 'Large Title', d ? '#fff' : '#333', { w: 91, b: 700 });
  field(x + 9, 670, 185, d); field(x + 9, 748, 185, d); field(x + 9, 850, 185, d); field(x + 9, 943, 185, d); field(x + 9, 1017, 150, d);
  R(x + 24, 1020, 2, 12, d ? '#ff9500' : '#4a5fe8'); T(x + 192, 1027, 9, 'Cancel', k, { w: 27, a: 'end', b: 600 });
});
[[481, 0], [695, 1]].forEach(function (q) {
  var x = q[0], d = q[1], k = d ? OR : LB;
  [[337, [34, 102, 170]], [374, [25, 76, 126, 177]], [412, [20, 61, 102, 142, 182]]].forEach(function (t, n) {
    card(x, t[0], 202, 26, d);
    t[1].forEach(function (p, i) { var c = i || (d && n == 2) ? '#8b8b8f' : (d ? '#ff9500' : BL); star(x + p, t[0] + 11, 7, c); R(x + p - 6, t[0] + 20, 12, 3, c, 0, ' opacity=".6"'); });
  });
  [[660, [17, 186]], [697, [17, 102, 186]], [735, [17, 72, 130, 186]], [772, [17, 60, 102, 144, 186]]].forEach(function (t) {
    card(x, t[0], 202, 24, d);
    t[1].forEach(function (p, i) {
      var cx = x + p, cy = t[0] + 13;
      if (!i) P('M' + (cx - 4) + ' ' + cy + 'h8m-4 -4v8', k, 1.500);
      else if (i == 1) P('M' + (cx - 5) + ' ' + (cy - 2) + 'v7h10v-7zM' + cx + ' ' + cy + 'v-8', k, 1.300);
      else if (i == 2) P('M' + (cx - 5) + ' ' + (cy - 5) + 'v10h10v-5m-6 0l7 -7', k, 1.300);
      else if (i == 3) P('M' + (cx - 6) + ' ' + (cy + 3) + 'v-6h12v6', k, 1.600);
      else P('M' + (cx - 4) + ' ' + (cy - 5) + 'h8v11h-8zM' + cx + ' ' + (cy - 4) + 'v9', k, 1.500);
    });
  });
  card(x, 811, 202, 24, d); card(x, 848, 202, 24, d);
  [824, 862].forEach(function (y, n) { T(x + 8, y, 9, 'Button 1', k, { w: 34, b: 600 }); if (n) T(x + 101, y, 9, 'Button 2', k, { w: 34, a: 'middle', b: 600 }); T(x + 194, y, 9, n ? 'Button 3' : 'Button 2', k, { w: 34, a: 'end', b: 600 }); });
});
out.push('</g>');

dots(879, 1084);
board(860, 'Controls', 31, 862, 126);
function W(x, y, w, h) { R(x, y, w, h, '#fff', 0, ' stroke="#c5c5c8" stroke-width="1.500"'); }
label(41, 203, 'Buttons', 24); label(254, 203, 'Sliders', 20); label(467, 203, 'Page Controls', 39); label(680, 203, 'Progress Indicators', 53);
label(41, 296, 'Segmented Control', 54); label(254, 296, 'Stepper', 23); label(467, 269, 'Edit Menu', 29); label(254, 355, 'Switch', 17); label(467, 355, 'Text Field', 27); label(41, 440, 'Table View Cells', 45);
W(42, 212, 202, 24); T(143, 229, 9, 'Button', LB, { w: 28, a: 'middle', b: 600 });
W(42, 245, 25, 25); W(75, 245, 24, 25); C(54, 257, 5, 'none', ' stroke="#4ba0fb"'); C(87, 257, 5, 'none', ' stroke="#4ba0fb"');
W(42, 305, 202, 23); R(51, 310, 185, 13, '#fff', 3, ' stroke="#4ba0fb" stroke-width="1"'); R(51, 310, 62, 13, BL, 3); P('M172 310v13', LB, 1);
T(82, 320, 8, 'First', '#fff', { a: 'middle' }); T(143, 320, 8, 'Second', LB, { a: 'middle', w: 16 }); T(205, 320, 8, 'Third', LB, { a: 'middle' });
W(255, 213, 202, 23); R(263, 224, 90, 2.500, LB); R(353, 224, 96, 2, '#ddd'); C(357, 226, 7, '#fff', ' stroke="#e5e5e5"');
W(255, 240, 202, 23); R(277, 251, 76, 2.500, LB); R(353, 251, 80, 2, '#ddd'); C(357, 252, 7, '#fff', ' stroke="#e5e5e5"'); R(263, 248, 6, 6, '#aaa'); R(441, 247, 10, 8, '#999', 2);
W(255, 305, 202, 23); T(264, 320, 9, 'Title', '#333'); R(393, 309, 54, 15, '#fff', 4, ' stroke="#4ba0fb"'); P('M421 309v15M403 315h9M431 315h8M435 311v8', LB, 1.500);
W(255, 363, 202, 24); T(264, 380, 9, 'Title', '#333'); R(420, 367, 28, 17, '#fff', 8, ' stroke="#e5e5e5"');
W(255, 390, 202, 24); T(264, 407, 9, 'Title', '#333'); R(420, 393, 28, 18, '#4cd964', 9); C(440, 402, 8, '#fff');
W(468, 212, 202, 11); R(557, 215, 6, 5, '#777'); C(569, 217.500, 1.500, '#bbb'); C(577, 217.500, 1.500, '#bbb');
R(491, 276, 160, 20, '#262626', 3); T(500, 290, 8.500, 'Cut', '#fff', { b: 600 }); T(530, 290, 8.500, 'Copy', '#fff', { w: 20, b: 600 }); T(568, 290, 8.500, 'Look Up', '#fff', { w: 27, b: 600 }); T(615, 290, 8.500, 'Share...', '#fff', { w: 24, b: 600 });
R(541, 307, 58, 12, '#43607f'); T(543, 317, 9.500, 'Selected text', '#16263c', { w: 54 }); C(541, 305, 3.500, BL); C(599, 321, 3.500, BL); P('M541 305v14M599 307v14', BL, 1.500);
W(468, 363, 202, 24); T(477, 380, 9, 'Text', '#444'); C(654, 375, 4, '#999');
W(681, 212, 202, 24); C(782, 224, 5, 'none', ' stroke="#aaa" stroke-width="3" stroke-dasharray="1.500 1.500"');
W(681, 245, 202, 24); T(731, 260, 8.500, 'Checking for Updates...', '#777', { w: 80 }); C(827, 257, 4, 'none', ' stroke="#bbb" stroke-width="2" stroke-dasharray="1.500 1.500"');
W(681, 278, 202, 23); R(690, 288, 92, 3, LB); R(782, 288, 92, 2, '#ddd');
R(681, 309, 203, 25, '#dcdcdc'); R(681, 308, 160, 2, LB); T(780, 326, 8, 'Reading', '#444', { w: 23, a: 'middle' });
[42, 255, 468, 681].forEach(function (x, c) {
  var tall = c % 2, det = c > 1;
  for (var r = 0; r < 7; r++) {
    var y = tall && r == 6 ? 675 : 449 + r * 38, h = tall ? 33 : 24;
    W(x, y, 202, h);
    if (r < 5) {
      T(x + 9, y + 14, 9, 'Title', '#333'); if (tall) T(x + 9, y + 25, 8, 'Subtitle', '#555', { w: 27 });
      var e = x + 190, my = y + h / 2 + 0.500;
      if (r == 1 || r == 4) P('M' + (e) + ' ' + (my - 3) + 'l2.500 3l-2.500 3', '#bbb', 1);
      if (r == 2 || r == 4) C(r == 2 ? e - 2 : e - 14, my - 2, 6, '#eef6ff', ' stroke="#6cb2fc" stroke-width="1.300"');
      if (r == 3) P('M' + (e - 4) + ' ' + my + 'l3 3l5 -7', BL, 1.500);
      if (det) T([e + 1, e - 5, e - 14, e - 12, e - 27][r], my + 3, 8.500, 'Detail', '#777', { w: 23, a: 'end' });
    } else {
      R(x + 164, y, 39, h + 1, '#ff3b30'); T(x + 183, y + h / 2 + 3, 8.500, 'Action', '#fff', { w: 27, a: 'middle', b: 700 });
      if (r == 6) { R(x + 126, y, 38, h + 1, '#8b8a8f'); T(x + 145, y + h / 2 + 3, 8.500, 'Action', '#fff', { w: 27, a: 'middle', b: 700 }); }
      var q = x + (r == 6 ? 114 : 152); P('M' + q + ' ' + (y + h / 2 - 3) + 'l2.500 3l-2.500 3', '#aaa', 1);
      if (det) T(q - 7, y + h / 2 + 3, 8.500, 'Detail', '#777', { w: 23, a: 'end' });
    }
  }
});
label(41, 737, 'Grouped Table View Headers and Footers', 106); label(254, 737, 'Table View with Plain Headers', 80); label(467, 737, 'Table View Section Index', 66);
R(42, 745, 203, 361, '#efeff4', 0, ' stroke="#c5c5c8" stroke-width="1.500"'); R(44, 778, 199, 96, '#fff');
T(51, 772, 7, 'SECTION HEADER', '#8a8a8f', { w: 60 });
[791, 815, 839, 863].forEach(function (y, i) { T(51, y, 9, 'Title', '#333'); P('M232 ' + (y - 6) + 'l2.500 3l-2.500 3', '#bbb', 1); if (i) R(51, y - 16, 192, 0.8, '#ddd'); });
T(51, 884, 7.500, 'This is a section footer. It describes the above group of cells.', '#8a8a8f', { w: 158 });
W(255, 745, 203, 361); R(255, 745, 203, 16, '#e4e4e4'); R(254, 761, 205, 4.500, '#77777b'); T(263, 757, 8, 'RI', '#333', { b: 700 });
[['S', 778, 1], ['South Carolina', 796, 0], ['South Dakota', 820, 0], ['T', 840, 1], ['Tennessee', 859, 0], ['Texas', 883, 0], ['U', 903, 1], ['Utah', 922, 0], ['V', 943, 1], ['Vermont', 961, 0], ['Virginia', 985, 0]].forEach(function (s) {
  if (s[2]) R(256, s[1] - 11, 201, 15, '#f5f5f5'); else P('M445 ' + (s[1] - 6) + 'l2.500 3l-2.500 3', '#bbb', 1);
  T(263, s[1], 9, s[0], '#333', { b: s[2] ? 700 : 400 });
});
R(468, 745, 193, 361, '#ededed'); R(661, 745, 10, 361, '#fff');
for (i = 0; i < 26; i++) T(666, 850 + i * 7.200, 8, String.fromCharCode(65 + i), LB, { a: 'middle', b: 600 });
out.push('</g>');

// Keyboards
function kb(x, y, theme, bar) {
  var t = { light: ['#d0d3d9', '#fff', '#9fa4ae', '#222', '#c0c5cc'], dark: ['#0e0e0e', '#464646', '#1f1f1f', '#fff', '#181818'] }[theme];
  if (bar) { R(x, y - 25, 203, 26, t[4]); ['“Hell”', 'Hello', 'Hellos'].forEach(function (s, i) { T(x + 34 + i * 67, y - 10, 9, s, '#fff', { w: 23, a: 'middle', b: 600 }); }); }
  R(x, y, 203, 115, t[0]);
  ['QWERTYUIOP', 'ASDFGHJKL', 'ZXCVBNM'].forEach(function (s, r) {
    for (var i = 0; i < s.length; i++) {
      var kx = x + 3 + [0, 10, 30.500][r] + i * 20, ky = y + 4 + r * 28.500;
      R(kx, ky, 16.500, 23, t[1], 3); T(kx + 8.200, ky + 16, 11.500, s[i], t[3], { a: 'middle', b: theme == 'dark' ? 600 : 400 });
    }
  });
  R(x + 3, y + 61, 22, 23, theme == 'dark' ? t[2] : '#fff', 3); C(x + 14, y + 73, 4, theme == 'dark' ? '#fff' : '#000');
  R(x + 178, y + 61, 22, 23, t[2], 3); R(x + 184, y + 68, 12, 8, theme == 'dark' ? '#555' : '#6a6e77', 2);
  R(x + 3, y + 90, 22, 22, t[2], 3); T(x + 14, y + 104, 8, '123', t[3], { a: 'middle' }); R(x + 29, y + 90, 20, 22, t[2], 3); C(x + 39, y + 101, 5, theme == 'dark' ? '#666' : '#50545c');
  R(x + 53, y + 90, 17, 22, t[1], 3); R(x + 59, y + 96, 5, 9, theme == 'dark' ? '#888' : '#777', 2); R(x + 74, y + 90, 76, 22, t[1], 3); T(x + 112, y + 105, 9, 'space', t[3], { a: 'middle' });
  R(x + 154, y + 90, 46, 22, t[2], 3); T(x + 177, y + 105, 9, 'return', t[3], { a: 'middle' });
}
dots(1173.300, 1084);
board(1155, 'Views', 28, 861, 110);
label(39, 209, 'Action Sheets', 37); label(677, 209, 'Activity View (iPhone)', 56); label(39, 602, 'Alerts', 16);
function dk(x, y, h, f) { R(x, y, 202, h, f || '#45454c', 0, ' stroke="#59595e" stroke-width="2"'); }
[40, 253, 466, 679].forEach(function (x, i) {
  dk(x, 213, 358, i == 3 ? '#454547' : 0); dk(x, 606, 359);
  R(x + 4, 536, 194, 31, '#fff', 6); T(x + 101, 556, 11.500, 'Cancel', '#1a86ff', { w: 34, a: 'middle', b: 700 });
});
[[40, 502, 1], [253, 471, 2], [466, 417, 3]].forEach(function (s) {
  R(s[0] + 4, s[1], 194, 530 - s[1], '#d7d7da', 6);
  for (var i = 0; i < s[2]; i++) { T(s[0] + 101, 520 - i * 30, 11, 'Action', '#3b97fc', { w: 33, a: 'middle', b: 600 }); if (i || s[2] == 3) R(s[0] + 4, 500.500 - i * 30, 194, 1, '#c2c2c6'); }
});
T(567, 435, 7.500, 'A short description of the actions goes here', '#8a8a8f', { w: 140, a: 'middle' });
R(683, 330, 193, 200, '#d5d5d6', 6); T(780, 338, 7, 'Tap to share with AirDrop', '#777', { w: 73, a: 'middle' });
['DA', 'VS', 'GM', 'KA'].forEach(function (s, i) {
  var cx = 706 + i * 45;
  C(cx, 360, 16, '#8f8f92'); T(cx, 365, 13, s, '#fff', { a: 'middle' });
  T(cx, 384, 7, 'Name', '#777', { a: 'middle' }); T(cx, 391, 7, 'MacBook Air', '#777', { a: 'middle', w: 30 });
  R(cx - 16, 409, 33, 34, ['#32c94f', '#1f87f2', '#fff', '#e6e6e6'][i], 7); T(cx, 451, 7, ['Message', 'Mail', 'Add to Notes', 'App Name'][i], '#555', { a: 'middle', w: i == 1 ? 14 : 28 });
  R(cx - 16, 473, 33, 34, i == 3 ? '#e9e9e9' : '#fff', 7); T(cx, 515, 7, ['Add to', 'Add', 'Add to', 'Action'][i], '#555', { a: 'middle' }); if (i < 3) T(cx, 522, 7, ['Favorites', 'Bookmark', 'Reading List'][i], '#555', { a: 'middle', w: 26 });
});
C(706, 425, 10, '#fff'); R(740, 418, 23, 15, '#fff', 2); P('M741 419l11 8l11 -8', '#59b0f8', 1.500); R(780, 409, 33, 9, '#fdc727', 4); R(784, 424, 25, 1, '#ddd'); R(784, 432, 25, 1, '#ddd');
star(707, 489, 9, '#333'); R(742, 481, 10, 14, '#333', 2); R(753, 481, 10, 14, '#333', 2); C(790, 489, 5, 'none', ' stroke="#999" stroke-width="1.500"'); C(802, 489, 5, 'none', ' stroke="#999" stroke-width="1.500"');
P('M830 414h22v23h-22zl22 23m0 -23l-22 23M830 478h22v23h-22zl22 23m0 -23l-22 23', '#d2d2d2', 1);
R(870, 345, 6, 30, '#8f8f92', 3); R(872, 409, 4, 34, '#3b66a8'); R(872, 473, 4, 34, '#fff');
dk(40, 973, 242); dk(253, 973, 242);
function alertBox(x, y, h, btns, two, inputs) {
  R(x, y, 147, h, '#d9d9db', 7);
  T(x + 73, y + 22, 8.500, two ? 'A longer title can extend' : 'A Short Title Is Best', '#333', { w: two ? 102 : 84, a: 'middle', b: 700 });
  var o = two ? 9 : 0;
  if (two) T(x + 73, y + 31, 8.500, 'onto multiple lines', '#333', { w: 76, a: 'middle', b: 700 });
  T(x + 73, y + 32 + o, 7.500, 'A message should be a short,', '#444', { w: 90, a: 'middle' });
  T(x + 73, y + 42 + o, 7.500, 'complete sentence.', '#444', { w: 60, a: 'middle' });
  if (inputs) { R(x + 9, y + 51, 129, inputs * 14, '#fff'); T(x + 13, y + 61, 7.500, inputs > 1 ? 'Username' : 'Placeholder', '#aaa'); if (inputs > 1) { T(x + 13, y + 74, 7.500, 'Password', '#aaa'); } R(x + 10, y + 53, 1.500, 9, '#4a5fe8'); }
  if (btns == 2) { R(x, y + h - 23, 147, 1, '#c0c0c4'); R(x + 73, y + h - 23, 1, 23, '#c0c0c4'); T(x + 37, y + h - 6, 9, 'Action 1', '#3b97fc', { w: 34, a: 'middle', b: 600 }); T(x + 110, y + h - 6, 9, 'Action 2', '#3b97fc', { w: 37, a: 'middle', b: 600 }); }
  else for (var i = 0; i < btns; i++) { R(x, y + h - 22 - i * 24, 147, 1, '#c0c0c4'); T(x + 73, y + h - 5 - i * 24, 9, i ? 'Secondary' : 'Primary', '#3b97fc', { w: i ? 44 : 33, a: 'middle', b: 600 }); }
}
alertBox(67, 747, 77, 1); alertBox(280, 747, 77, 2); alertBox(493, 741, 89, 1, 1); alertBox(706, 722, 126, 3); alertBox(67, 1045, 97, 2, 0, 1); alertBox(280, 1037, 114, 2, 0, 2);
kb(39, 1217, 'light'); kb(252, 1217, 'light');
out.push('</g>');

dots(1467.300, 1084);
board(1450, 'System', 27, 860, 118);
label(37, 209, 'Keyboards', 28); label(37, 959, 'Activity View', 36);
[37, 250, 463, 676].forEach(function (x) { R(x, 212, 202, 361, '#fff', 0, ' stroke="#a9a9ab" stroke-width="1.500"'); R(x, 579, 202, 360, '#000', 0, ' stroke="#4a4a4c" stroke-width="1.500"'); });
kb(37, 457, 'light', 1); kb(37, 824, 'dark', 1);
[[432, 0], [799, 1]].forEach(function (q) {
  var y = q[0], d = q[1];
  if (!d) R(250, y, 202, 140, '#eceef2');
  T(258, y + 10, 7, 'SMILEYS &amp; PEOPLE', '#8a8a8f', { w: 63 });
  for (var i = 0; i < 40; i++) {
    var cx = 266 + (i % 8) * 25, cy = y + (d ? 22 : 26) + Math.floor(i / 8) * 20.700, red = i == 39;
    C(cx, cy, 8.500, red ? '#e8542c' : '#f8c440'); R(cx - 5, cy - 3, 3.500, 2.500, '#8a5a1a'); R(cx + 2, cy - 3, 3.500, 2.500, '#8a5a1a');
    if ([4, 14, 19].indexOf(i) > -1) { R(cx - 5, cy - 4, 10, 5, '#e8542c', 2); }
    if ([5, 13].indexOf(i) > -1) R(cx - 8, cy - 4, 16, 5, '#4a3a20', 2);
    if ([24, 25, 9].indexOf(i) > -1) R(cx - 6, cy - 1, 5, 4, '#4aa8e8', 2);
    if (i == 36) R(cx - 4, cy + 2, 8, 4, '#5fae3c', 2);
    P('M' + (cx - 4) + ' ' + (cy + 3.500) + 'q4 3 8 0', '#a8691a', 2);
  }
  T(256, y + 132, 7, 'ABC', d ? '#999' : '#555'); C(301, y + 129, 6, d ? '#444' : '#a9b0ba'); C(284, y + 129, 3.500, d ? '#222' : '#d5d8dd');
  for (i = 0; i < 7; i++) C(318 + i * 17, y + 129, 3.500, d ? '#333' : '#c0c4cc'); R(435, y + 125, 12, 8, d ? '#666' : '#8a9099', 2);
});
[[457, 0], [824, 1]].forEach(function (q) {
  var y = q[0], d = q[1], sub = ['', 'ABC', 'DEF', 'GHI', 'JKL', 'MNO', 'PQRS', 'TUV', 'WXYZ'];
  R(463, y, 202, 115, d ? '#0c0c0c' : '#d3d7de');
  for (var i = 0; i < 10; i++) {
    var c = i == 9 ? 1 : i % 3, r = Math.floor(i / 3), kx = 467 + c * 66, ky = y + 3 + r * 29.500;
    R(kx, ky, 62, 23, d ? '#454547' : '#fff', 3); T(kx + 31, ky + 13, 11, i == 9 ? '0' : i + 1, d ? '#fff' : '#222', { a: 'middle' });
    if (sub[i]) T(kx + 31, ky + 21, 6.500, sub[i], d ? '#fff' : '#333', { a: 'middle', b: 600 });
  }
  C(632, y + 100, 5.500, 'none', ' stroke="' + (d ? '#999' : '#777') + '" stroke-width="1.500"');
  R(676, y, 202, 115, d ? '#080808' : '#adb0b5');
  var hs = [2, 4, 8, 6, 3, 2, 5, 9, 12, 8, 11, 6, 3, 4, 2, 6, 13, 15, 9, 14, 8, 15, 10, 6, 4, 7, 5, 8, 14, 11, 6, 3, 5, 2, 8, 12, 7, 4, 3, 6, 4, 2, 2, 1], wc = d ? '#8d8d8d' : '#d8dadd';
  hs.forEach(function (h, i) { R(695 + i * 3.800, y + 57 - h, 2.200, h * 2, wc); }); R(690, y + 56.500, 176, 1, wc);
  T(777, y + 103, 9, 'Done', '#fff', { w: 23, a: 'middle', b: 700 });
});
[37, 250].forEach(function (x, i) {
  R(x, 962, 202, 360, '#99989d', 0, ' stroke="#a9a9ab" stroke-width="1.500"'); R(x + 8, 1011, 186, 122, '#f3f3f4', 5);
  T(x + 16, 1025, 9, 'Cancel', '#3b97fc', { w: 27, b: 600 }); T(x + 101, 1025, 9, 'Twitter', '#333', { w: 28, a: 'middle', b: 600 }); T(x + 187, 1025, 9, 'Post', '#3b97fc', { w: 19, a: 'end', b: 700 });
  R(x + 8, 1035, 186, 0.8, '#ddd'); T(x + 15, 1051, 8.500, 'Hello', '#444', { w: 18 }); R(x + 34, 1042, 1.500, 11, '#4a5fe8');
  T(x + 15, 1102, 7.500, '140', '#999'); R(x + 8, 1109, 186, 0.8, '#ddd'); T(x + 15, 1123, 8, 'Location', '#666', { w: 36 }); T(x + 175, 1123, 8, 'None', '#888', { w: 22, a: 'end' });
  if (i) R(x + 148, 1042, 39, 39, '#f8b9b7');
  kb(x, 1207, 'light');
});
out.push('</g>');
document.getElementById('board').innerHTML = out.join('');
```
